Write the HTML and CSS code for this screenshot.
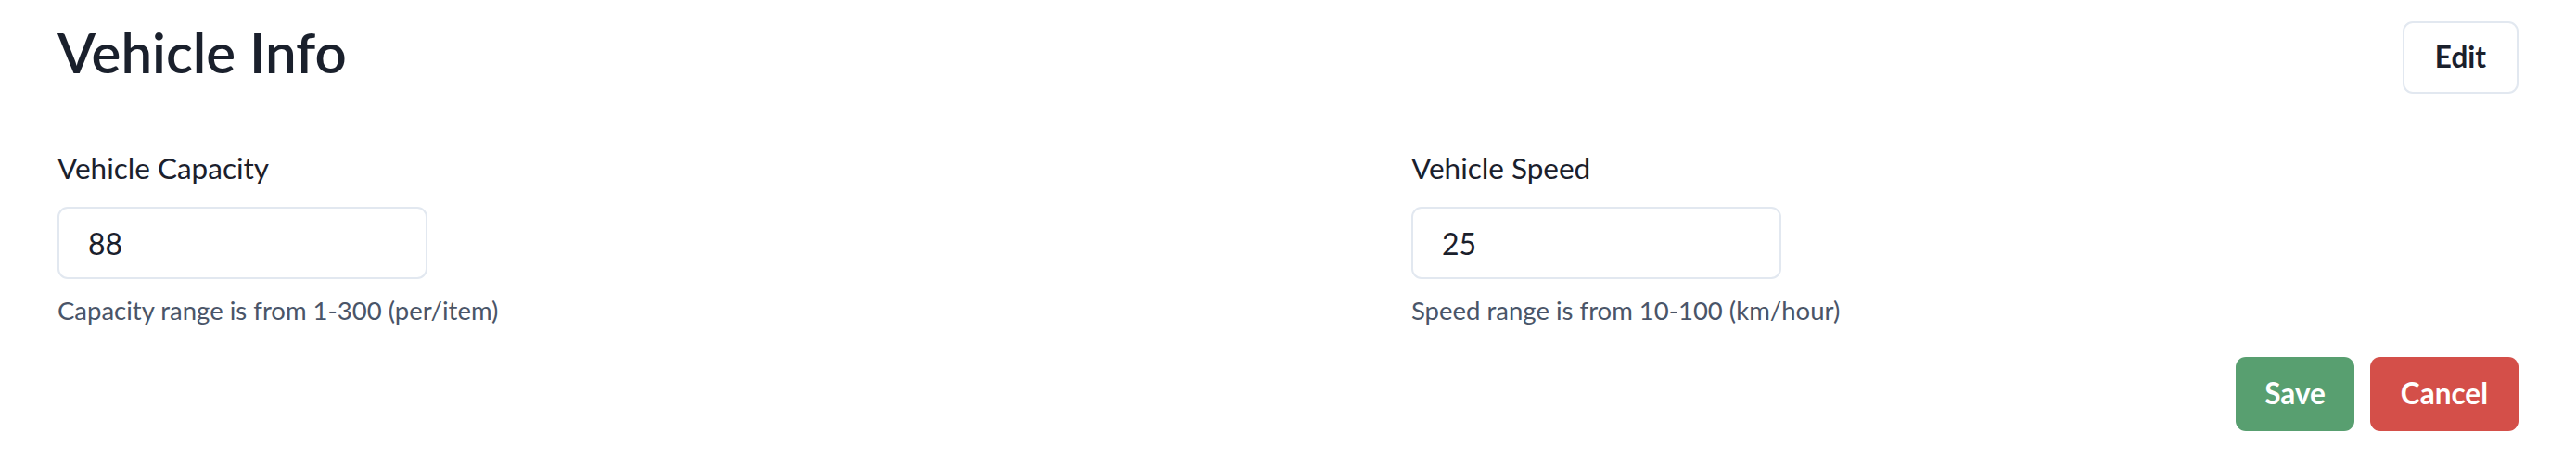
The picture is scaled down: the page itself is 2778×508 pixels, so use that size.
FILE: index.html
```html
<!DOCTYPE html>
<html lang="en">
<head>
<meta charset="utf-8">
<title>Vehicle Info</title>
<link rel="stylesheet" href="styles.css">
</head>
<body>
<div class="page">
  <div class="header">
    <h1 class="title">Vehicle Info</h1>
    <button class="btn btn-edit" type="button">Edit</button>
  </div>
  <div class="fields">
    <div class="field">
      <label class="label" for="cap">Vehicle Capacity</label>
      <input class="input" id="cap" type="text" value="88">
      <div class="helper">Capacity range is from 1-300 (per/item)</div>
    </div>
    <div class="field">
      <label class="label" for="spd">Vehicle Speed</label>
      <input class="input" id="spd" type="text" value="25">
      <div class="helper">Speed range is from 10-100 (km/hour)</div>
    </div>
  </div>
  <div class="actions">
    <button class="btn btn-save" type="button">Save</button>
    <button class="btn btn-cancel" type="button">Cancel</button>
  </div>
</div>
</body>
</html>
```

FILE: styles.css
```css
html, body {
  margin: 0;
  padding: 0;
  background: #ffffff;
}

body {
  font-family: Lato, "Noto Sans", sans-serif;
  color: #1a202c;
}

.page {
  padding: 20px 62px 0 62px;
}

.header {
  display: flex;
  justify-content: space-between;
  align-items: flex-start;
  height: 81px;
}

.title {
  margin: 0;
  font-size: 60px;
  font-weight: 600;
  line-height: 1.2;
  color: #1a202c;
}

.btn {
  font-family: Lato, "Noto Sans", sans-serif;
  font-size: 31.5px;
  font-weight: 700;
  height: 80px;
  padding: 0 31px;
  border: none;
  border-radius: 11px;
  line-height: 1;
  cursor: pointer;
}

.btn-edit {
  margin-top: 3px;
  height: 78px;
  padding: 0 33px;
  background: #ffffff;
  border: 2px solid #e2e8f0;
  color: #1a202c;
}

.fields {
  display: grid;
  grid-template-columns: 1fr 1fr;
  column-gap: 266px;
  margin-top: 57px;
}

.field {
  display: flex;
  flex-direction: column;
  align-items: flex-start;
}

.label {
  font-size: 31.5px;
  line-height: 1.5;
  font-weight: 400;
  color: #1a202c;
  margin-bottom: 18px;
}

.input {
  box-sizing: border-box;
  width: 399px;
  height: 78px;
  padding: 0 31px;
  border: 2px solid #e2e8f0;
  border-radius: 11px;
  font-family: Lato, "Noto Sans", sans-serif;
  font-size: 32px;
  color: #1a202c;
  background: #ffffff;
  outline: none;
}

.helper {
  margin-top: 13px;
  font-size: 27.5px;
  line-height: 1.5;
  color: #4a5568;
}

.actions {
  display: flex;
  justify-content: flex-end;
  gap: 17px;
  margin-top: 29px;
}

.btn-save {
  background: #589f70;
  color: #ffffff;
}

.btn-cancel {
  padding: 0 33px;
  background: #d44f49;
  color: #ffffff;
}
```
